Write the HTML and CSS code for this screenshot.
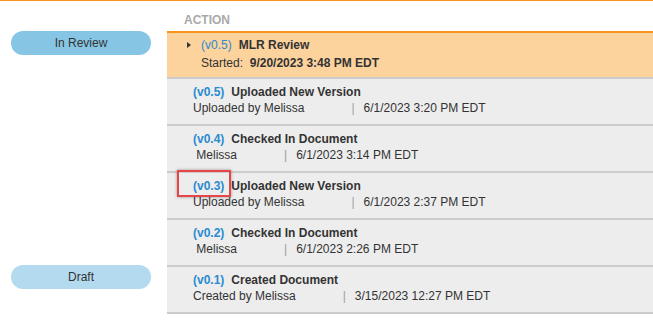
FILE: index.html
```html
<!DOCTYPE html>
<html>
<head>
<meta charset="utf-8">
<link rel="stylesheet" href="styles.css">
</head>
<body>
<div class="top-rule"></div>
<div class="history">
  <div class="line head">
    <div class="stage"></div>
    <div class="head-cell">ACTION</div>
  </div>

  <div class="line">
    <div class="stage"><span class="pill review">In Review</span></div>
    <div class="cell current">
      <div class="title"><span class="caret"></span><span class="ver plain">(v0.5)</span><span class="what">MLR Review</span></div>
      <div class="meta started">Started:&nbsp; <b>9/20/2023 3:48 PM EDT</b></div>
    </div>
  </div>

  <div class="line">
    <div class="stage"></div>
    <div class="cell">
      <div class="title"><span class="ver">(v0.5)</span><span class="what">Uploaded New Version</span></div>
      <div class="meta"><span class="who">Uploaded by Melissa</span><span class="sep">|</span><span>6/1/2023 3:20 PM EDT</span></div>
    </div>
  </div>

  <div class="line">
    <div class="stage"></div>
    <div class="cell">
      <div class="title"><span class="ver">(v0.4)</span><span class="what">Checked In Document</span></div>
      <div class="meta"><span class="who">&nbsp;Melissa</span><span class="sep">|</span><span>6/1/2023 3:14 PM EDT</span></div>
    </div>
  </div>

  <div class="line">
    <div class="stage"></div>
    <div class="cell">
      <div class="title"><span class="ver marked">(v0.3)</span><span class="what">Uploaded New Version</span></div>
      <div class="meta"><span class="who">Uploaded by Melissa</span><span class="sep">|</span><span>6/1/2023 2:37 PM EDT</span></div>
    </div>
  </div>

  <div class="line">
    <div class="stage"></div>
    <div class="cell">
      <div class="title"><span class="ver">(v0.2)</span><span class="what">Checked In Document</span></div>
      <div class="meta"><span class="who">&nbsp;Melissa</span><span class="sep">|</span><span>6/1/2023 2:26 PM EDT</span></div>
    </div>
  </div>

  <div class="line">
    <div class="stage"><span class="pill draft">Draft</span></div>
    <div class="cell last">
      <div class="title"><span class="ver">(v0.1)</span><span class="what">Created Document</span></div>
      <div class="meta"><span class="who">Created by Melissa</span><span class="sep">|</span><span>3/15/2023 12:27 PM EDT</span></div>
    </div>
  </div>
</div>
</body>
</html>
```

FILE: styles.css
```css
html, body {
  margin: 0;
  padding: 0;
  background: #ffffff;
}

body {
  font-family: "Liberation Sans", Arial, sans-serif;
  font-size: 12px;
  line-height: 16px;
  color: #333333;
}

.top-rule {
  height: 1px;
  background: #f7941d;
}

.line {
  display: flex;
}

.stage {
  width: 167px;
  flex: none;
}

.head {
  height: 30px;
}

.head-cell {
  flex: 1;
  padding: 11px 0 0 17px;
  font-weight: bold;
  color: #a9a9a9;
}

.pill {
  display: block;
  width: 140px;
  height: 24px;
  margin-left: 11px;
  border-radius: 12px;
  text-align: center;
  line-height: 24px;
  color: #333333;
}

.pill.review {
  background: #86c5e4;
}

.pill.draft {
  background: #b3daef;
}

.cell {
  flex: 1;
  height: 45px;
  box-sizing: content-box;
  border-top: 2px solid #cccccc;
  background: #ededed;
  padding: 5px 0 0 26px;
  box-sizing: border-box;
  height: 47px;
}

.cell.last {
  height: 49px;
  border-bottom: 2px solid #cccccc;
}

.cell.current {
  height: 46px;
  border-top: 2px solid #f7941d;
  background: #fcd29d;
  padding: 4px 0 0 20px;
}

.title {
  display: flex;
  align-items: center;
  white-space: nowrap;
}

.caret {
  width: 0;
  height: 0;
  border-left: 4px solid #333333;
  border-top: 3.5px solid transparent;
  border-bottom: 3.5px solid transparent;
  margin-right: 10px;
}

.ver {
  position: relative;
  font-weight: bold;
  color: #2a8bd0;
  margin-right: 7px;
}

.ver.plain {
  font-weight: normal;
}

.ver.marked::after {
  content: "";
  position: absolute;
  left: -16px;
  top: -8px;
  width: 54px;
  height: 27px;
  box-sizing: border-box;
  border: 2px solid #e8454a;
  box-shadow: 0 0 3px rgba(0, 0, 0, 0.35);
}

.what {
  font-weight: bold;
}

.meta {
  white-space: nowrap;
}

.meta.started {
  margin-top: 2px;
  padding-left: 14px;
}

.who {
  margin-right: 47px;
}

.sep {
  color: #a0a0a0;
  margin-right: 9px;
}
```
